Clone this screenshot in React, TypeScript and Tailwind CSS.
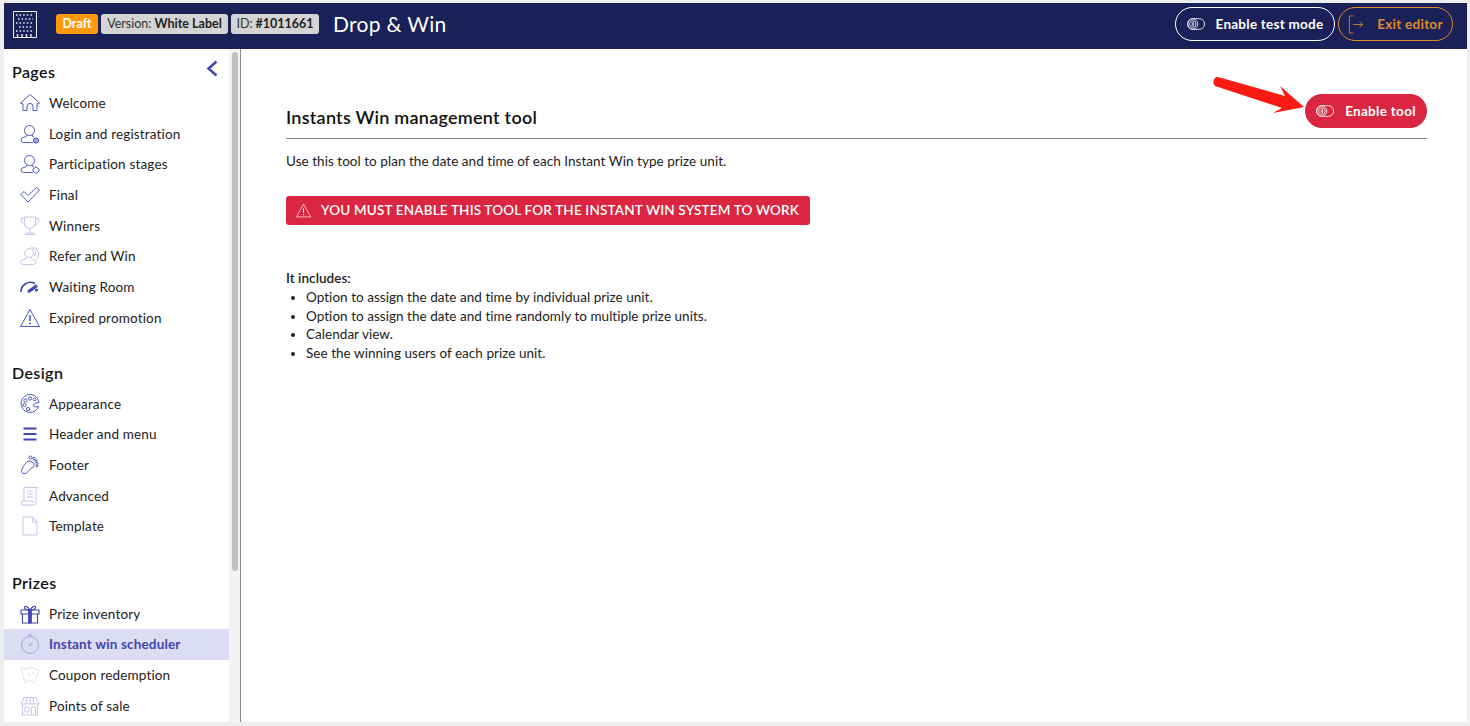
import type { ReactNode } from "react";

const ic = "w-[20px] h-[20px] shrink-0 text-[#3f47b3]";

const House = () => (
  <svg viewBox="0 0 20 20" className={ic} fill="none" stroke="currentColor" strokeWidth="0.9" strokeLinejoin="round">
    <path d="M10 1.5 L19.5 10 L17 11 L17 17.5 L13 17.5 L13 13 Q13 10.5 10 10.5 Q7 10.5 7 13 L7 17.5 L3 17.5 L3 11 L0.5 10 Z" />
  </svg>
);
const UserIcon = ({ badge }: { badge: ReactNode }) => (
  <svg viewBox="0 0 20 20" className={ic} fill="none" stroke="currentColor" strokeWidth="0.9">
    <circle cx="9.5" cy="6.5" r="5" />
    <path d="M7 11 Q7 13 3.5 13.5 Q1 14 1 16 Q1 18.5 3.5 18.5 L13 18.5" />
    <path d="M12 11 Q12 12.5 14 13" />
    {badge}
  </svg>
);
const Check = () => (
  <svg viewBox="0 0 20 20" className={ic} fill="none" stroke="currentColor" strokeWidth="0.9" strokeLinejoin="round">
    <path d="M0.8 9.5 L4 6.5 L8 10.5 L16.5 2.5 L19.5 5 L8 17 Z" />
  </svg>
);
const Trophy = () => (
  <svg viewBox="0 0 20 20" className={`${ic} opacity-30`} fill="none" stroke="currentColor" strokeWidth="1">
    <path d="M4.5 1 L15.5 1 L15.5 7 Q15.5 12 10 12.5 Q4.5 12 4.5 7 Z" />
    <path d="M4.5 2.5 L1 2.5 Q1 8 6 9.5 M15.5 2.5 L19 2.5 Q19 8 14 9.5 M10 12.5 L10 17 M5 18.5 L15 18.5 L14 17 L6 17 Z" />
  </svg>
);
const Refer = () => (
  <svg viewBox="0 0 20 20" className={`${ic} opacity-30`} fill="none" stroke="currentColor" strokeWidth="1">
    <circle cx="9" cy="7" r="4.5" />
    <path d="M7 11 Q7 13 3 13.5 Q0.8 14 0.8 16 Q0.8 18.5 3 18.5 L13 18.5 Q16 18.5 16 16 Q16 14 13 13.5 Q11 13 11 11" />
    <path d="M11 1.5 Q15.5 2 15.5 7 Q15.5 9 14 10.5 M14 1 Q18.5 3 18.5 8 Q18.5 11 17 13" />
  </svg>
);
const Gauge = () => (
  <svg viewBox="0 0 20 20" className={ic} fill="none" stroke="currentColor">
    <path d="M1 15 A 9.5 9.5 0 0 1 15 6.5" strokeWidth="1.6" />
    <path d="M8 15 L17 8.5" strokeWidth="3" />
    <circle cx="16.5" cy="13" r="1.6" fill="currentColor" stroke="none" />
  </svg>
);
const Warn = ({ className }: { className: string }) => (
  <svg viewBox="0 0 20 20" className={className} fill="none" stroke="currentColor" strokeWidth="0.9" strokeLinejoin="round">
    <path d="M10 1.5 L19.5 18.5 L0.5 18.5 Z" />
    <path d="M10 7 L10 13" strokeWidth="1.4" />
    <circle cx="10" cy="15.5" r="0.9" fill="currentColor" stroke="none" />
  </svg>
);
const Palette = () => (
  <svg viewBox="0 0 20 20" className={ic} fill="none" stroke="currentColor" strokeWidth="0.9">
    <path d="M18.5 12.5 A 9 9 0 1 1 19 8.5 Q14.5 8.5 13 11.5 Q15 14 18.5 12.5 Z" />
    <circle cx="10" cy="4.5" r="1.6" />
    <circle cx="14.5" cy="5.5" r="1.4" />
    <circle cx="5.5" cy="6.5" r="1.6" />
    <circle cx="4.5" cy="11" r="1.6" />
    <circle cx="8" cy="15" r="1.6" />
  </svg>
);
const Menu = () => (
  <svg viewBox="0 0 20 20" className={ic} fill="none" stroke="currentColor" strokeWidth="2">
    <path d="M3.5 4.5 L16.5 4.5 M3.5 10 L16.5 10 M3.5 15.5 L16.5 15.5" />
  </svg>
);
const Foot = () => (
  <svg viewBox="0 0 20 20" className={ic} fill="none" stroke="currentColor" strokeWidth="0.9">
    <path d="M8 6 Q4.5 9 2.5 13 Q0.5 17 3 18.5 Q6.5 19.5 9 15.5 Q10.5 13 13.5 12 Q15 9 13 7.5 Q10 5.5 8 6 Z" />
    <circle cx="10.5" cy="2.5" r="1.5" />
    <circle cx="14" cy="3.5" r="1.2" />
    <circle cx="16" cy="6" r="1.1" />
    <circle cx="17" cy="8.5" r="1" />
    <circle cx="17" cy="11" r="0.9" />
  </svg>
);
const Scroll = () => (
  <svg viewBox="0 0 20 20" className={`${ic} opacity-30`} fill="none" stroke="currentColor" strokeWidth="1">
    <path d="M4 15 L4 1.5 L18 1.5 L16 3.5 L16 17 Q16 19 13 19 L3 19 Q1 19 1 17 Q1 15 3 15 L13 15 L13 17 M7 5 L13 5 M7 8 L13 8 M7 11 L13 11" />
  </svg>
);
const Doc = () => (
  <svg viewBox="0 0 20 20" className={`${ic} opacity-30`} fill="none" stroke="currentColor" strokeWidth="1" strokeLinejoin="round">
    <path d="M3 1 L12.5 1 L17 6 L17 19 L3 19 Z M12.5 1 L12.5 6 L17 6" />
  </svg>
);
const Gift = () => (
  <svg viewBox="0 0 20 20" className={ic} fill="none" stroke="currentColor" strokeWidth="1.1">
    <path d="M1 6 L19 6 L19 10 L1 10 Z M2.5 10 L2.5 19 L17.5 19 L17.5 10" />
    <path d="M10 6 Q4 6 4.5 3 Q6 0.5 10 6 Q14 0.5 15.5 3 Q16 6 10 6 Z" />
    <path d="M8.7 6 L11.3 6 L11.3 19 L8.7 19 Z" fill="currentColor" />
  </svg>
);
const Timer = () => (
  <svg viewBox="0 0 20 20" className={`${ic} opacity-35`} fill="none" stroke="currentColor" strokeWidth="1">
    <circle cx="10" cy="11" r="8.5" />
    <path d="M9 0.8 L11 0.8 L11 2.5 L9 2.5 Z M10 11 L13 8.5" />
    <circle cx="10" cy="11" r="0.8" />
  </svg>
);
const Ticket = () => (
  <svg viewBox="0 0 20 20" className={`${ic} opacity-15`} fill="none" stroke="currentColor" strokeWidth="1" strokeLinejoin="round">
    <path d="M1 3 L8 4 L11 2 L19 5 L14 18 L9 15 L5 18 L1 3 Z M8 8 L10 12 M12 7 L14 9" />
  </svg>
);
const Store = () => (
  <svg viewBox="0 0 20 20" className={`${ic} opacity-30`} fill="none" stroke="currentColor" strokeWidth="1">
    <path d="M4 1.5 L16 1.5 L19 8 L1 8 Z M7 1.5 L6 8 M10 1.5 L10 8 M13 1.5 L14 8 M2.5 8 L2.5 19 L17.5 19 L17.5 8 M5 11 L9 11 L9 16 L5 16 Z M11.5 11 L15.5 11 L15.5 19 M11.5 11 L11.5 19" />
  </svg>
);
const Toggle = ({ className }: { className: string }) => (
  <svg viewBox="0 0 20 13" className={className} fill="none" stroke="currentColor" strokeWidth="0.9">
    <rect x="0.5" y="0.5" width="19" height="12" rx="6" />
    <circle cx="6.5" cy="6.5" r="5.6" />
    <circle cx="6.5" cy="6.5" r="3.6" />
    <path d="M5.8 4.5 L5.8 8.5 M7.2 4.5 L7.2 8.5" />
  </svg>
);
const Building = () => (
  <svg viewBox="0 0 24 27" className="w-[24px] h-[27px] shrink-0 text-[#eceef8]" fill="none" stroke="currentColor">
    <path d="M0.5 0.5 L23.5 0.5 L23.5 26.5 L0.5 26.5 Z" strokeWidth="1" />
    <path d="M3 4 L21 4 M5 8 L20 8 M3 12 L20 12 M6 16 L19 16 M3 20 L21 20" strokeWidth="1.4" strokeDasharray="1.5 2.1" />
    <path d="M4.5 23 L4.5 26 M9 23 L9 26 M13.5 23 L13.5 26 M18 23 L18 26" strokeWidth="1.4" />
  </svg>
);

const NavRow = ({ icon, label, active }: { icon: ReactNode; label: string; active?: boolean }) => (
  <div className={`h-[30.7px] flex items-center gap-[9px] pl-[16px] tracking-[0.16px] ${active ? "bg-[#dcdcf3] font-bold text-[#3f47b3]" : "text-[#222222]"}`}>
    {icon}
    <span>{label}</span>
  </div>
);

const Heading = ({ children, className }: { children: ReactNode; className: string }) => (
  <h2 className={`pl-[8px] text-[16px] leading-[22px] font-semibold tracking-[0.4px] text-[#111111] ${className}`}>{children}</h2>
);

export default function App() {
  return (
    <div className="h-[726px] overflow-hidden bg-[#eeeeee] pt-[3px] pl-[4px] pr-[3px] pb-[4px] flex flex-col font-['Lato','Noto_Sans',sans-serif] text-[13.5px]">
      <header className="h-[46px] shrink-0 bg-[#1a2158] flex items-center pl-[9px] pr-[14px] pb-[4px]">
        <Building />
        <div className="flex items-center gap-[3px] ml-[19px] text-[12.5px]">
          <span className="h-[20px] w-[42px] justify-center rounded-[3px] bg-[#ff9a0d] text-white font-bold flex items-center">Draft</span>
          <span className="h-[20px] w-[127px] justify-center rounded-[3px] bg-[#d4d4d4] text-[#333333] flex items-center gap-[3px]">
            Version: <b className="text-[#222222]">White Label</b>
          </span>
          <span className="h-[20px] w-[88px] justify-center rounded-[3px] bg-[#d4d4d4] text-[#333333] flex items-center gap-[3px]">
            ID: <b className="text-[#222222]">#1011661</b>
          </span>
        </div>
        <span className="ml-[14px] text-[21px] text-white tracking-[0.3px]">Drop &amp; Win</span>
        <div className="ml-auto flex items-center gap-[3px] text-[13.5px] tracking-[0.25px] font-bold">
          <button className="h-[34px] w-[160px] rounded-full border border-white text-white flex items-center justify-center gap-[11px]">
            <Toggle className="w-[18px] h-[12px]" />
            Enable test mode
          </button>
          <button className="h-[34px] w-[115px] rounded-full border border-[#e08a2c] text-[#e08a2c] flex items-center justify-center gap-[13px]">
            <svg viewBox="0 0 16 20" className="w-[16px] h-[19px]" fill="none" stroke="currentColor" strokeWidth="0.9">
              <path d="M5.5 1 L1 1 L1 19 L5.5 19" />
              <path d="M5 10 L15 10 M12 7 L15 10 L12 13" />
            </svg>
            Exit editor
          </button>
        </div>
      </header>

      <div className="flex-1 min-h-0 flex bg-white">
        <aside className="w-[225px] shrink-0 overflow-hidden pt-[12px] relative">
          <svg viewBox="0 0 12 17" className="absolute right-[11px] top-[11px] w-[12px] h-[17px] text-[#3f47b3]" fill="none" stroke="currentColor" strokeWidth="2.5">
            <path d="M10.5 1.5 L2.5 8.5 L10.5 15.5" />
          </svg>
          <Heading className="mb-[4.6px]">Pages</Heading>
          <NavRow icon={<House />} label="Welcome" />
          <NavRow icon={<UserIcon badge={<circle cx="16" cy="16.5" r="2.6" fill="currentColor" fillOpacity="0.5" />} />} label="Login and registration" />
          <NavRow icon={<UserIcon badge={<path d="M13 15 L16 13 L19 15 L19 17 L16 19.5 L13 17 Z" />} />} label="Participation stages" />
          <NavRow icon={<Check />} label="Final" />
          <NavRow icon={<Trophy />} label="Winners" />
          <NavRow icon={<Refer />} label="Refer and Win" />
          <NavRow icon={<Gauge />} label="Waiting Room" />
          <NavRow icon={<Warn className={ic} />} label="Expired promotion" />
          <Heading className="mt-[28.6px] mb-[4.6px]">Design</Heading>
          <NavRow icon={<Palette />} label="Appearance" />
          <NavRow icon={<Menu />} label="Header and menu" />
          <NavRow icon={<Foot />} label="Footer" />
          <NavRow icon={<Scroll />} label="Advanced" />
          <NavRow icon={<Doc />} label="Template" />
          <Heading className="mt-[30px] mb-[4.6px]">Prizes</Heading>
          <NavRow icon={<Gift />} label="Prize inventory" />
          <NavRow icon={<Timer />} label="Instant win scheduler" active />
          <NavRow icon={<Ticket />} label="Coupon redemption" />
          <NavRow icon={<Store />} label="Points of sale" />
        </aside>

        <div className="w-[12px] shrink-0 bg-[#f4f4f4] border-r border-[#8a8a8a] pt-[3px] pl-[3px]">
          <div className="w-[6px] h-[519px] rounded-full bg-[#c1c1c1]" />
        </div>

        <main className="flex-1 min-w-0 pl-[45px] pr-[40px] pt-[45px] text-[#222222] tracking-[0.04px] relative">
          <svg viewBox="0 0 92 44" className="absolute left-[972px] top-[25px] w-[92px] h-[44px] text-[#fa1b12] z-10" fill="currentColor">
            <path d="M5 3 L72 22 L67 12 L91 33 L60 39 L69 34 L2 12 Q0 10 0.5 7 Q1.5 2.5 5 3 Z" />
          </svg>
          <div className="flex items-end justify-between border-b border-[#8a8a8a] pb-[10px]">
            <h1 className="text-[18px] leading-[24px] -mb-[1px] font-semibold tracking-[0.25px] text-[#111111]">Instants Win management tool</h1>
            <button className="h-[34px] w-[122px] rounded-full bg-[#da2640] text-white text-[13.5px] tracking-[0.3px] font-bold flex items-center justify-center gap-[11px]">
              <Toggle className="w-[18px] h-[12px]" />
              Enable tool
            </button>
          </div>
          <p className="mt-[13px] leading-[19px]">Use this tool to plan the date and time of each Instant Win type prize unit.</p>
          <div className="mt-[25px] w-[524px] h-[29px] rounded-[3px] bg-[#da2640] text-white font-semibold tracking-[0.17px] flex items-center gap-[9px] pl-[9px]">
            <Warn className="w-[17px] h-[15px]" />
            YOU MUST ENABLE THIS TOOL FOR THE INSTANT WIN SYSTEM TO WORK
          </div>
          <p className="mt-[44px] leading-[19px] font-semibold">It includes:</p>
          <ul className="list-disc pl-[20px] leading-[18.7px]">
            <li>Option to assign the date and time by individual prize unit.</li>
            <li>Option to assign the date and time randomly to multiple prize units.</li>
            <li>Calendar view.</li>
            <li>See the winning users of each prize unit.</li>
          </ul>
        </main>
      </div>
    </div>
  );
}
